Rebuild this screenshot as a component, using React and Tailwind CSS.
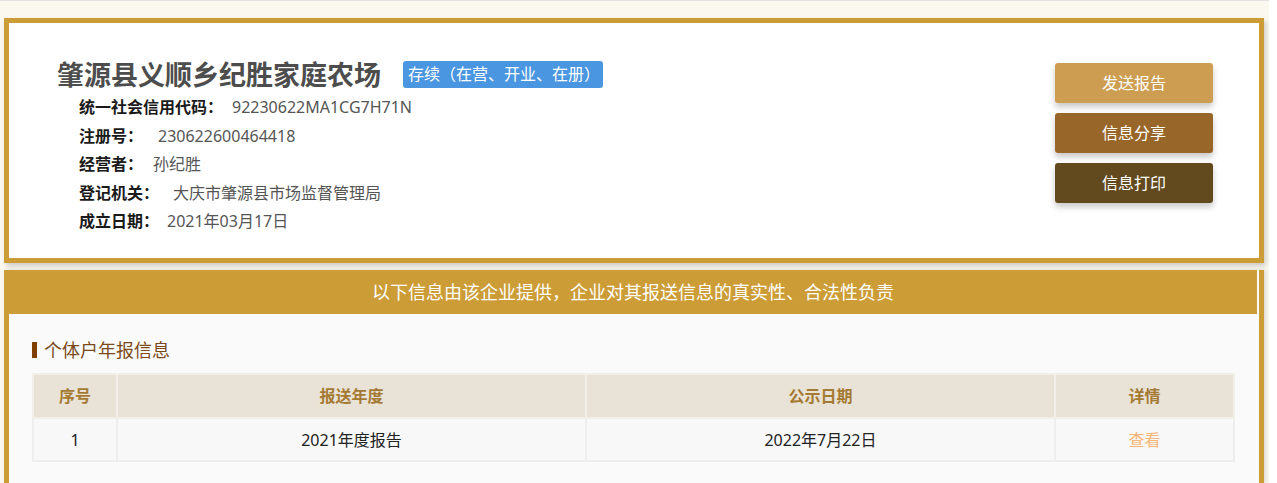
export default function App() {
  const fields = [
    ["统一社会信用代码：", "92230622MA1CG7H71N", "ml-[9px]"],
    ["注册号：", "230622600464418", "ml-[15px]"],
    ["经营者：", "孙纪胜", "ml-[10px]"],
    ["登记机关：", "大庆市肇源县市场监督管理局", "ml-[14px]"],
    ["成立日期：", "2021年03月17日", "ml-[8px]"],
  ];
  const buttons = [
    ["发送报告", "bg-[#cd9e52]"],
    ["信息分享", "bg-[#996629]"],
    ["信息打印", "bg-[#634a1e]"],
  ];
  return (
    <div
      className="w-[1269px] min-h-[483px] bg-[#fbf8f0] border-t border-[#e2e2e2] pt-[17px] pl-[4px]"
      style={{ fontFamily: '"Noto Sans", "Noto Sans CJK SC", sans-serif' }}
    >
      <div className="w-[1260px] h-[245px] border-[5px] border-[#cc9c36] bg-white shadow-[2px_3px_5px_rgba(0,0,0,0.18)] flex justify-between">
        <div className="pl-[48px] pt-[38px]">
          <div className="flex items-center h-[27px]">
            <span className="text-[27px] leading-[27px] font-bold text-[#4d4d4d]">肇源县义顺乡纪胜家庭农场</span>
            <span className="ml-[22px] h-[27px] w-[200px] bg-[#4a96e0] rounded-[3px] text-white text-[16px] leading-[27px] pl-[5px]">存续（在营、开业、在册）</span>
          </div>
          <div className="mt-[5px] ml-[22px] text-[16px] leading-[28.5px]">
            {fields.map(([k, v, m]) => (
              <div key={k} className="flex">
                <span className="font-bold text-[#1a1a1a]">{k}</span>
                <span className={`${m} text-[#555555]`}>{v}</span>
              </div>
            ))}
          </div>
        </div>
        <div className="pt-[40px] pr-[46px] flex flex-col gap-[10px]">
          {buttons.map(([t, c]) => (
            <div
              key={t}
              className={`${c} w-[158px] h-[40px] rounded-[3px] text-white text-[16px] flex items-center justify-center shadow-[0_4px_6px_rgba(0,0,0,0.22)]`}
            >
              {t}
            </div>
          ))}
        </div>
      </div>
      <div className="mt-[7px] w-[1260px] border-l-[5px] border-r-[5px] border-[#cc9c36] bg-[#fafafa] shadow-[2px_0_4px_rgba(0,0,0,0.12)] min-h-[213px]">
        <div className="mr-[2px] h-[44px] bg-[#cc9c36] text-white text-[18px] leading-[44px] text-center">
          以下信息由该企业提供，企业对其报送信息的真实性、合法性负责
        </div>
        <div className="pl-[23px] pt-[26px]">
          <div className="flex items-center h-[20px]">
            <div className="w-[5px] h-[16px] bg-[#7f3f00] shrink-0"></div>
            <span className="ml-[7px] text-[18px] leading-[20px] text-[#7a4a1c]">个体户年报信息</span>
          </div>
          <table className="mt-[13px] w-[1203px] border-collapse border-2 border-[#eeeeee] text-[16px]">
            <thead>
              <tr className="bg-[#e9e2d6] text-[#a47a33]">
                <th className="w-[84px] h-[44px] border-2 border-[#f2eee8] font-bold">序号</th>
                <th className="w-[469px] h-[44px] border-2 border-[#f2eee8] font-bold">报送年度</th>
                <th className="w-[469px] h-[44px] border-2 border-[#f2eee8] font-bold">公示日期</th>
                <th className="h-[44px] border-2 border-[#f2eee8] font-bold">详情</th>
              </tr>
            </thead>
            <tbody>
              <tr className="bg-[#f8f8f8] text-[#222222]">
                <td className="h-[43px] border-2 border-[#eeeeee] text-center">1</td>
                <td className="h-[43px] border-2 border-[#eeeeee] text-center">2021年度报告</td>
                <td className="h-[43px] border-2 border-[#eeeeee] text-center">2022年7月22日</td>
                <td className="h-[43px] border-2 border-[#eeeeee] text-center text-[#f7b677]">查看</td>
              </tr>
            </tbody>
          </table>
        </div>
      </div>
    </div>
  );
}
